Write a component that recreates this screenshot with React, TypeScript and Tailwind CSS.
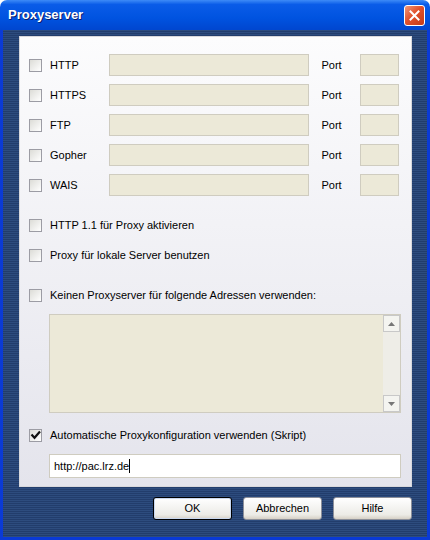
import React from "react";

const font = "font-['Tahoma','Liberation_Sans','DejaVu_Sans',sans-serif]";

const Checkbox = ({ checked = false }: { checked?: boolean }) => (
  <span className="relative w-[13px] h-[13px] shrink-0 border border-[#9c9ca4] bg-[linear-gradient(135deg,#dcdcd7,#ffffff)]">
    {checked && (
      <svg className="absolute -left-px -top-px" width="13" height="13" viewBox="0 0 13 13">
        <path d="M2.5 5.5 L5.5 8.8 L11 2.5" fill="none" stroke="#111" strokeWidth="2.2" />
      </svg>
    )}
  </span>
);

const Field = ({ className }: { className: string }) => (
  <div className={`h-[22px] border border-[#cfccc0] bg-[#ece9d8] ${className}`} />
);

const ProxyRow = ({ label }: { label: string }) => (
  <div className="flex items-center">
    <div className="flex items-center gap-2 w-[80px]">
      <Checkbox />
      <span>{label}</span>
    </div>
    <Field className="w-[202px]" />
    <span className="ml-[12px] w-[39px]">Port</span>
    <Field className="w-[39px]" />
  </div>
);

const Option = ({ label, checked }: { label: string; checked?: boolean }) => (
  <div className="h-[16px] flex items-center gap-2">
    <Checkbox checked={checked} />
    <span>{label}</span>
  </div>
);

const Button = ({ label, primary }: { label: string; primary?: boolean }) => (
  <button
    className={`w-[79px] h-[23px] rounded-[3px] border bg-[linear-gradient(#ffffff,#ecebe6_80%,#d6d0c5)] text-black ${
      primary ? "border-black shadow-[inset_0_0_0_1px_#c9d8f0]" : "border-[#8c8f99]"
    }`}
  >
    {label}
  </button>
);

export default function App() {
  return (
    <div className={`w-[430px] h-[540px] flex flex-col text-[11px] text-black ${font}`}>
      <div className="h-[30px] shrink-0 rounded-t-[7px] bg-[linear-gradient(#3d8bf7,#0a5ce8_15%,#0053e0_60%,#0046cf)] flex items-center justify-between pl-[8px] pr-[5px]">
        <span className="text-white font-bold text-[13px] [text-shadow:1px_1px_#0a1e6e]">Proxyserver</span>
        <div className="w-[21px] h-[21px] rounded-[3px] border border-white bg-[linear-gradient(135deg,#f0997a,#e2512c_45%,#c23b17)] flex items-center justify-center">
          <svg width="11" height="11" viewBox="0 0 11 11">
            <path d="M1.5 1.5 L9.5 9.5 M9.5 1.5 L1.5 9.5" stroke="#fff" strokeWidth="2" strokeLinecap="square" />
          </svg>
        </div>
      </div>
      <div className="flex-1 flex flex-col border-[3px] border-t-0 border-[#0a3ad6] bg-[repeating-linear-gradient(#2d4c7e_0_1px,#223d6c_1px_2px)] pt-[6px]">
        <div className="ml-[16px] w-[393px] h-[451px] border border-[#d8d8dc] bg-[linear-gradient(#fcfcfd,#e4e4ec)] pl-[9px] pr-[12px] pt-[17px] flex flex-col">
          <div className="flex flex-col gap-[8px]">
            <ProxyRow label="HTTP" />
            <ProxyRow label="HTTPS" />
            <ProxyRow label="FTP" />
            <ProxyRow label="Gopher" />
            <ProxyRow label="WAIS" />
          </div>
          <div className="mt-[21px] flex flex-col gap-[14px]">
            <Option label="HTTP 1.1 für Proxy aktivieren" />
            <Option label="Proxy für lokale Server benutzen" />
          </div>
          <div className="mt-[24px]">
            <Option label="Keinen Proxyserver für folgende Adressen verwenden:" />
          </div>
          <div className="mt-[11px] ml-[20px] w-[352px] h-[99px] border border-[#cfccc0] bg-[#ece9d8] flex justify-end">
            <div className="w-[17px] flex flex-col justify-between bg-[#eeede7]">
              <div className="h-[17px] border border-[#c8c8c8] bg-[#f4f4f0] flex items-center justify-center">
                <svg width="7" height="4" viewBox="0 0 7 4"><path d="M0 4 L3.5 0 L7 4 Z" fill="#777" /></svg>
              </div>
              <div className="h-[17px] border border-[#c8c8c8] bg-[#f4f4f0] flex items-center justify-center">
                <svg width="7" height="4" viewBox="0 0 7 4"><path d="M0 0 L3.5 4 L7 0 Z" fill="#777" /></svg>
              </div>
            </div>
          </div>
          <div className="mt-[14px]">
            <Option label="Automatische Proxykonfiguration verwenden (Skript)" checked />
          </div>
          <div className="mt-[11px] ml-[20px] w-[352px] h-[24px] border border-[#cfccc0] bg-white flex items-center pl-[4px]">
            <span>http://pac.lrz.de</span>
            <span className="w-px h-[14px] bg-black" />
          </div>
        </div>
        <div className="mt-[10px] flex justify-end gap-[11px] pr-[15px]">
          <Button label="OK" primary />
          <Button label="Abbrechen" />
          <Button label="Hilfe" />
        </div>
      </div>
    </div>
  );
}
